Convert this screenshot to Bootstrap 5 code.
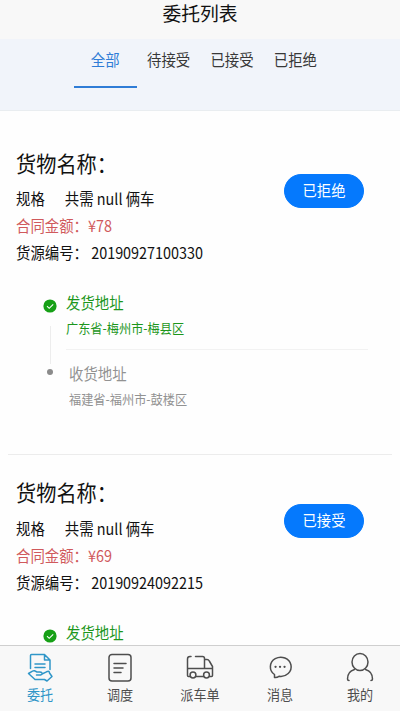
<!DOCTYPE html>
<html lang="zh-CN">
<head>
<meta charset="utf-8">
<meta name="viewport" content="width=device-width, initial-scale=1">
<title>委托列表</title>
<link href="https://cdn.jsdelivr.net/npm/bootstrap@5.3.0/dist/css/bootstrap.min.css" rel="stylesheet">
<style>
body { font-family: "Noto Sans CJK SC", sans-serif; font-size: 14.4px; color: #111; height: 711px; background: #fefefe; }
.title-bar { height: 39px; background: #f8f8f8; font-size: 18.8px; line-height: 26px; color: #111; flex: none; }
.tabs-bar { height: 72px; background: #f1f4fa; border-bottom: 1px solid #e9edf0; padding-left: 73.5px; flex: none; }
.tabs-bar .nav-link { width: 63.4px; height: 49px; padding: 0; line-height: 41px; color: #383838; border-bottom: 2px solid transparent; }
.tabs-bar .nav-link.active { color: #2f7cd6; border-color: #2f7cd6; }
.tall { display: inline-block; transform: scaleY(1.07); }
.title-bar .tall { transform: none; }
.order-list { padding-top: 13.5px; }
.order { height: 329.5px; margin: 0 8px; padding: 0 0 0 8px; border-top: 1px solid #ececec; flex: none; }
.order:first-child { border-color: transparent; }
.order-info { height: 143px; padding-top: 22.4px; }
.order-name { font-size: 20.2px; line-height: 30px; margin-bottom: 7.6px; }
.order-line { line-height: 27px; white-space: pre; }
.spec { margin-right: 20px; }
.amount { color: #d0595c; }
.btn-state { --bs-btn-bg: #0579fd; --bs-btn-border-color: #0579fd; width: 80px; height: 34px; margin: 48.5px 28px 0 0; padding: 0 0 2px; font-size: 14.3px; line-height: 30px; }
.route { padding: 21.5px 24.5px 0 26px; }
.rail { width: 16px; margin-right: 8px; padding-top: 9px; }
.rail i { width: 1px; height: 38px; background: #ededed; margin: 13px 0 4.5px; }
.rail b { width: 6px; height: 6px; background: #8b8b8b; }
.from { height: 59.5px; color: #1c961c; border-bottom: 1px solid #f2f2f2; }
.from-name { color: #1c961c; }
.to { color: #929292; padding: 11px 0 0 3px; }
.place { line-height: 25px; }
.region { font-size: 12.2px; line-height: 26px; }
.bottom-bar { height: 66px; background: #f8f8f8; border-top: 1px solid #cfcfcf; flex: none; }
.bottom-bar a { width: 80px; color: #4e4e4e; font-size: 13.1px; line-height: 20px; text-decoration: none; }
.bottom-bar a.active { color: #3096c8; }
.bottom-bar svg { width: 34px; height: 34px; margin: 5px 0 0; fill: none; stroke: currentColor; stroke-width: 1.5; stroke-linecap: round; stroke-linejoin: round; }
</style>
</head>
<body class="d-flex flex-column overflow-hidden">
<header class="title-bar text-center"><span class="tall">委托列表</span></header>
<nav class="tabs-bar nav flex-nowrap text-center">
  <a class="nav-link active" href="#"><span class="tall">全部</span></a>
  <a class="nav-link" href="#"><span class="tall">待接受</span></a>
  <a class="nav-link" href="#"><span class="tall">已接受</span></a>
  <a class="nav-link" href="#"><span class="tall">已拒绝</span></a>
</nav>
<main class="order-list flex-grow-1 overflow-hidden d-flex flex-column">
  <section class="order">
    <div class="d-flex justify-content-between align-items-start">
      <div class="order-info">
        <div class="order-name"><span class="tall">货物名称：</span></div>
        <div class="order-line"><span class="tall spec">规格</span><span class="tall">共需 null 俩车</span></div>
        <div class="order-line amount"><span class="tall">合同金额：¥78</span></div>
        <div class="order-line"><span class="tall">货源编号： 20190927100330</span></div>
      </div>
      <button class="btn btn-primary btn-state rounded-pill"><span class="tall">已拒绝</span></button>
    </div>
    <div class="route d-flex">
      <div class="rail d-flex flex-column align-items-center">
        <svg width="14" height="14" viewBox="0 0 14 14"><circle cx="7" cy="7" r="6.6" fill="#16a016"/><path d="M4 7.2l2.2 2.1 4-4" fill="none" stroke="#fff" stroke-width="1.1"/></svg>
        <i></i><b class="rounded-circle"></b>
      </div>
      <div class="flex-grow-1">
        <div class="from"><div class="place"><span class="tall">发货地址</span></div><div class="region"><span class="tall">广东省-梅州市-梅县区</span></div></div>
        <div class="to"><div class="place"><span class="tall">收货地址</span></div><div class="region"><span class="tall">福建省-福州市-鼓楼区</span></div></div>
      </div>
    </div>
  </section>
  <section class="order">
    <div class="d-flex justify-content-between align-items-start">
      <div class="order-info">
        <div class="order-name"><span class="tall">货物名称：</span></div>
        <div class="order-line"><span class="tall spec">规格</span><span class="tall">共需 null 俩车</span></div>
        <div class="order-line amount"><span class="tall">合同金额：¥69</span></div>
        <div class="order-line"><span class="tall">货源编号： 20190924092215</span></div>
      </div>
      <button class="btn btn-primary btn-state rounded-pill"><span class="tall">已接受</span></button>
    </div>
    <div class="route d-flex">
      <div class="rail d-flex flex-column align-items-center">
        <svg width="14" height="14" viewBox="0 0 14 14"><circle cx="7" cy="7" r="6.6" fill="#16a016"/><path d="M4 7.2l2.2 2.1 4-4" fill="none" stroke="#fff" stroke-width="1.1"/></svg>
      </div>
      <div class="place from-name text-nowrap"><span class="tall">发货地址</span></div>
    </div>
  </section>
</main>
<nav class="bottom-bar d-flex">
  <a class="active d-flex flex-column align-items-center" href="#">
    <svg viewBox="0 0 34 34"><path d="M7.500 17.500V4.500Q7.500 3.500 8.500 3.500H21.500L27 9V18.500M21.500 3.500V9H27M12 13H22M12 16.500H22M13.500 24H17.500Q19.500 23.500 19 22Q18.500 21 16.500 21H14L11.500 19.800Q10.500 19.500 9.500 20.200L5.500 22.500L12 28.500H21.500L24 30L29 25.500L26.500 22Q26.500 19.500 23.500 20.800L19 23"/></svg>
    <span class="tall">委托</span></a>
  <a class="d-flex flex-column align-items-center" href="#">
    <svg viewBox="0 0 34 34"><rect x="6" y="3.500" width="22" height="26.500" rx="3"/><path d="M11 12.500H23M11 17H20M11 21.500H18"/></svg>
    <span class="tall">调度</span></a>
  <a class="d-flex flex-column align-items-center" href="#">
    <svg viewBox="0 0 34 34"><path d="M7 25.500H5.500Q4.500 25.500 4.500 24.500V8Q4.500 5.500 7 5.500H8M12.500 5.500H19.500Q21.500 5.500 21.500 7.500V17.500M4.500 17.500H29.500M21.500 8.500H24Q25.500 8.500 26.300 10L29.500 15.500V24.500Q29.500 25.500 28.500 25.500H26.500M13 25.500H20.500"/><circle cx="10" cy="24" r="2.900"/><circle cx="23.500" cy="24" r="2.900"/></svg>
    <span class="tall">派车单</span></a>
  <a class="d-flex flex-column align-items-center" href="#">
    <svg viewBox="0 0 34 34"><path d="M11.500 26.500V23.500A10.400 9.600 0 1 1 16 25.300Q14 26.800 11.500 26.500Z"/><path d="M12.500 15.800h.1M17 15.800h.1M21.500 15.800h.1" stroke-width="2.200"/></svg>
    <span class="tall">消息</span></a>
  <a class="d-flex flex-column align-items-center" href="#">
    <svg viewBox="0 0 34 34"><ellipse cx="17" cy="11" rx="8" ry="8.500"/><path d="M11.500 18.500Q4.500 20.500 4.500 28Q4.500 29.500 6 29.500M22.500 18.500Q29.500 20.500 29.500 28Q29.500 29.500 28 29.500"/></svg>
    <span class="tall">我的</span></a>
</nav>
<script src="https://cdn.jsdelivr.net/npm/bootstrap@5.3.0/dist/js/bootstrap.bundle.min.js"></script>
</body>
</html>
